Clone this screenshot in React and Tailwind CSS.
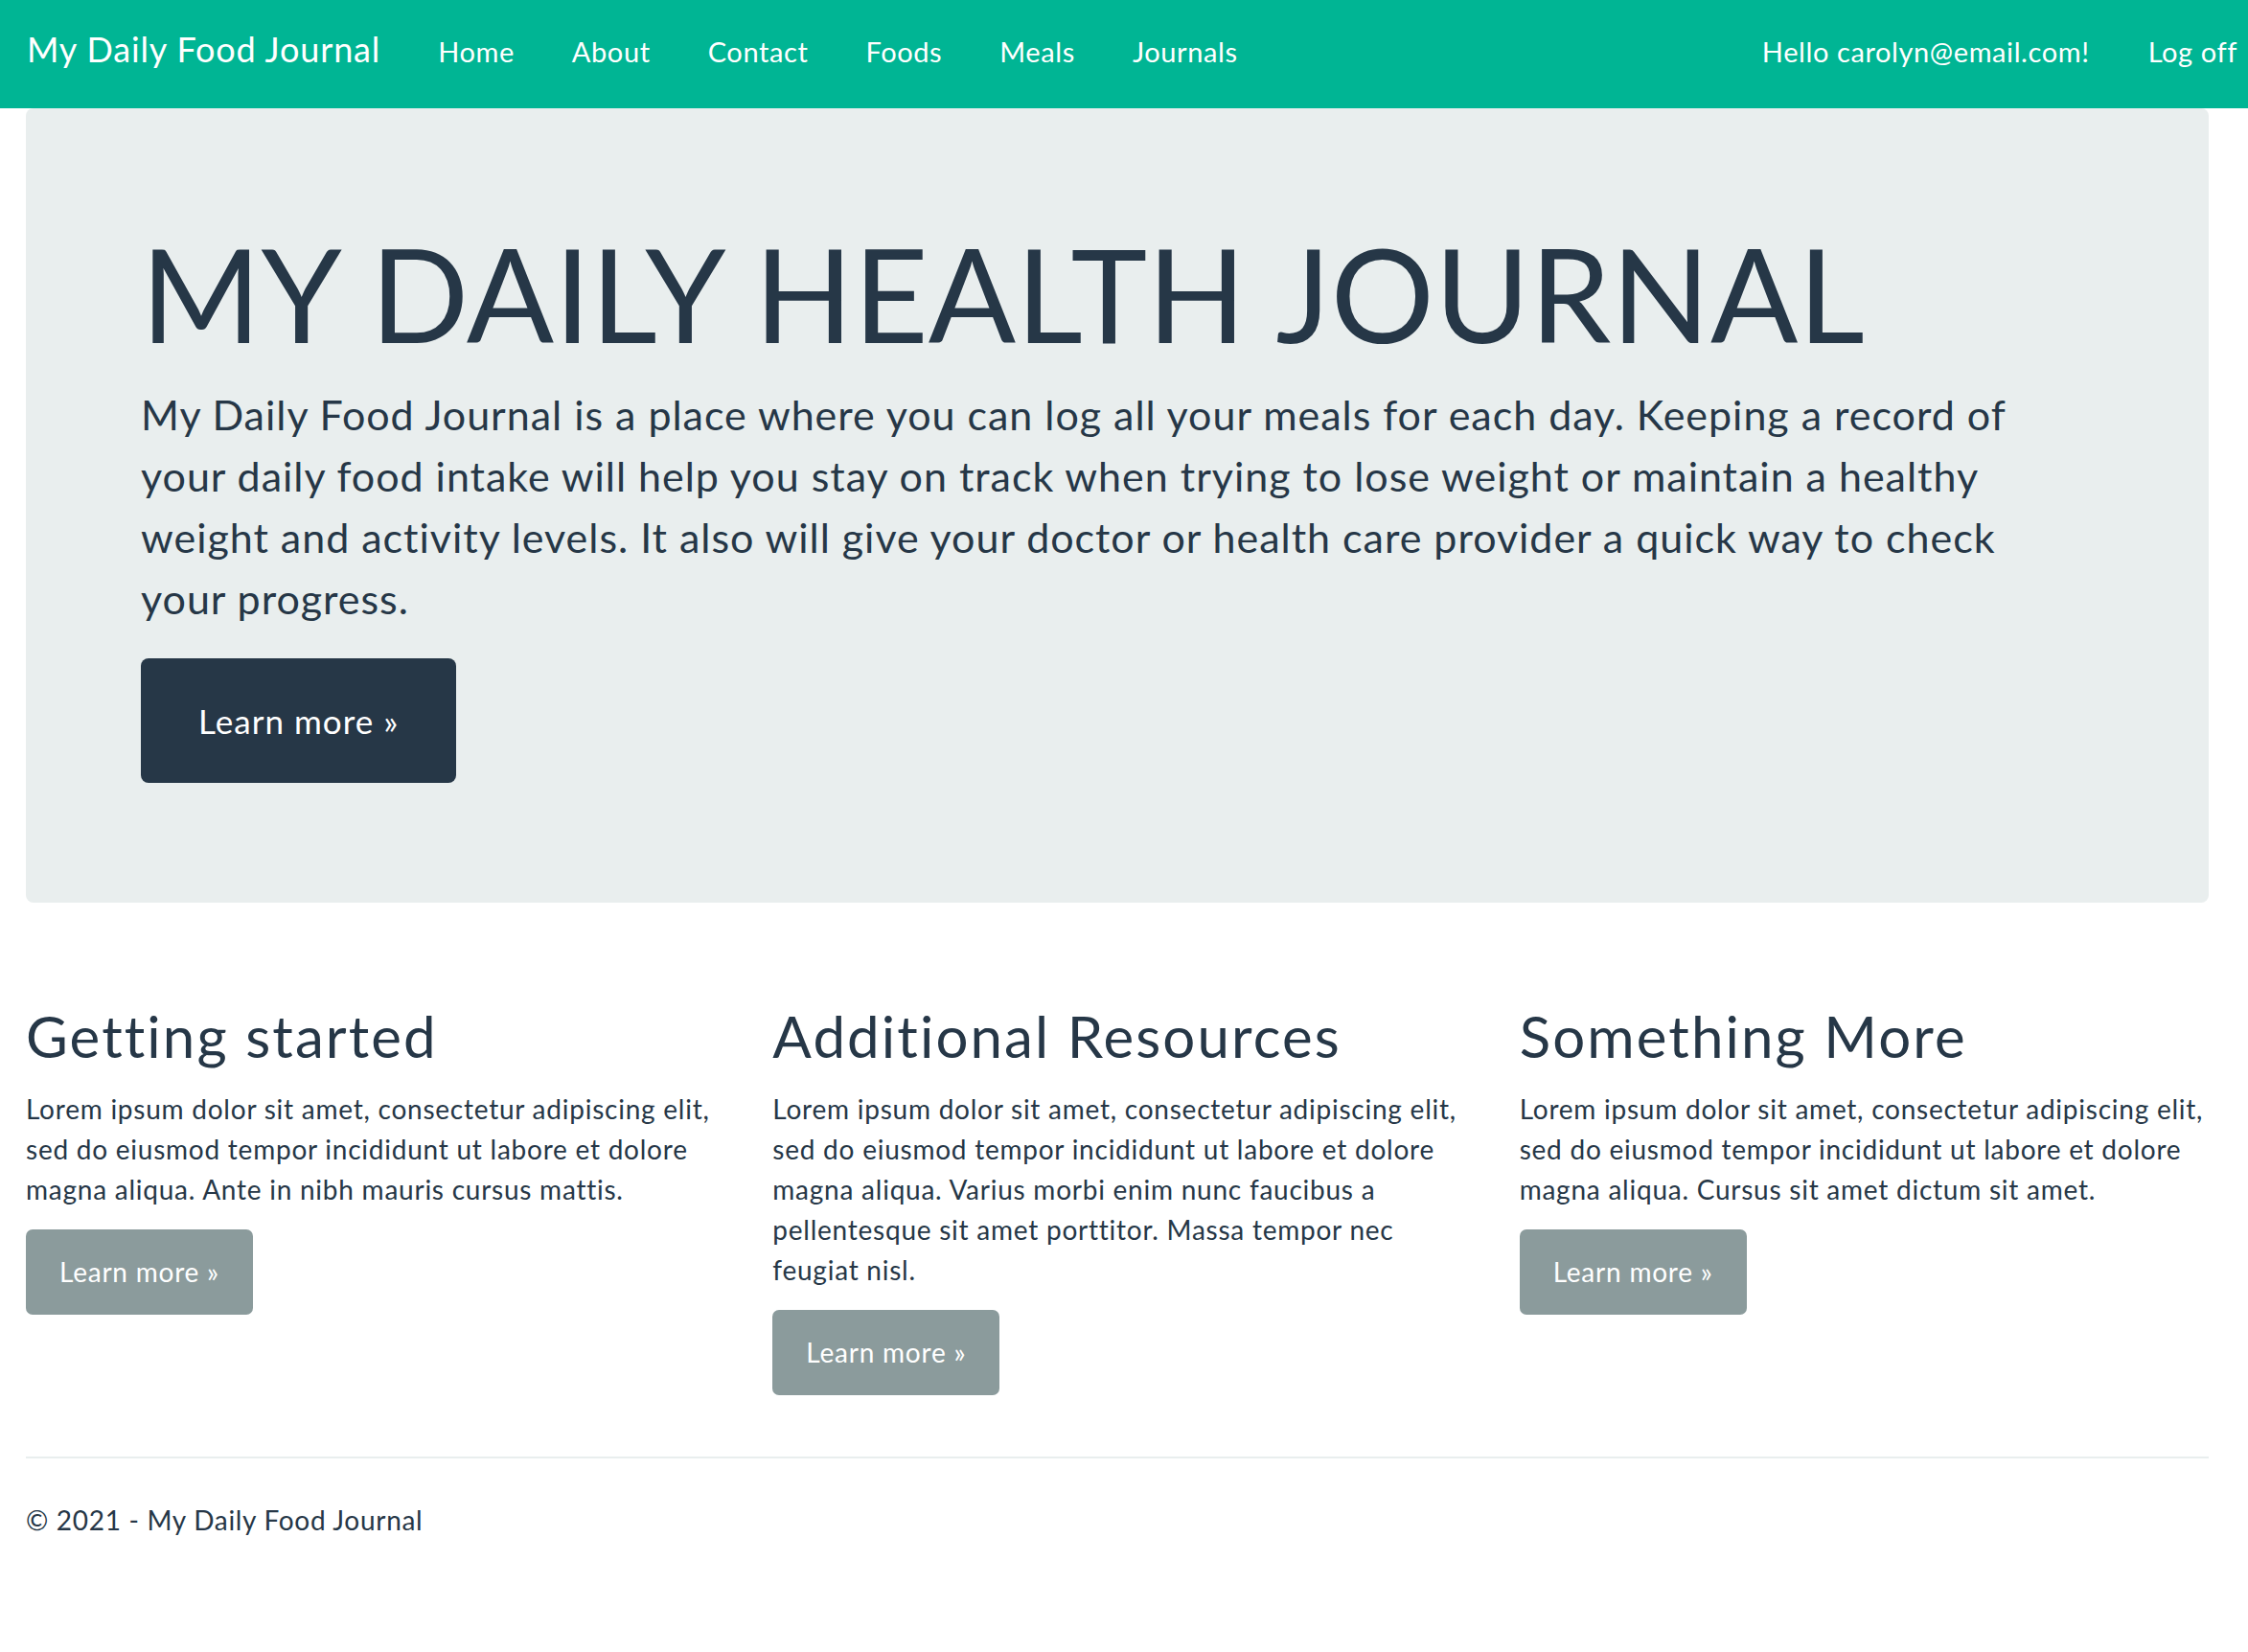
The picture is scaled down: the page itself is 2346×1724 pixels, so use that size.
import React from 'react';

const navLinks = ['Home', 'About', 'Contact', 'Foods', 'Meals', 'Journals'];

const columns = [
    {
        title: 'Getting started',
        text: 'Lorem ipsum dolor sit amet, consectetur adipiscing elit, sed do eiusmod tempor incididunt ut labore et dolore magna aliqua. Ante in nibh mauris cursus mattis.',
    },
    {
        title: 'Additional Resources',
        text: 'Lorem ipsum dolor sit amet, consectetur adipiscing elit, sed do eiusmod tempor incididunt ut labore et dolore magna aliqua. Varius morbi enim nunc faucibus a pellentesque sit amet porttitor. Massa tempor nec feugiat nisl.',
    },
    {
        title: 'Something More',
        text: 'Lorem ipsum dolor sit amet, consectetur adipiscing elit, sed do eiusmod tempor incididunt ut labore et dolore magna aliqua. Cursus sit amet dictum sit amet.',
    },
];

const App = () => {
    return (
        <div className="min-h-screen bg-white font-['Lato','Liberation_Sans',sans-serif] text-[#263747]">
            <nav className="flex h-[113px] items-baseline bg-[#00b594] pl-[28px] pr-[11px] pt-[28px] text-white">
                <a href="#" className="mr-[60px] text-[36px] leading-[46px] tracking-[0.85px]">My Daily Food Journal</a>
                <ul className="flex gap-[60px] text-[29px] leading-[35px] tracking-[0.6px]">
                    {navLinks.map(link => (
                        <li key={link}>
                            <a href="#">{link}</a>
                        </li>
                    ))}
                </ul>
                <div className="ml-auto flex gap-[61px] text-[29px] leading-[35px] tracking-[0.6px]">
                    <a href="#">Hello carolyn@email.com!</a>
                    <a href="#">Log off</a>
                </div>
            </nav>

            <div className="pl-[27px] pr-[41px]">
                <div className="rounded-[8px] bg-[#e9eeee] px-[120px] pb-[125px] pt-[112px]">
                    <h1 className="mb-[14px] text-[135px] leading-[162px] tracking-[0.25px]">MY DAILY HEALTH JOURNAL</h1>
                    <p className="mb-[30px] text-[43px] leading-[64px] tracking-[0.98px]">
                        My Daily Food Journal is a place where you can log all your meals for each day. Keeping a record of<br />
                        your daily food intake will help you stay on track when trying to lose weight or maintain a healthy<br />
                        weight and activity levels. It also will give your doctor or health care provider a quick way to check<br />
                        your progress.
                    </p>
                    <a href="#" className="inline-block rounded-[8px] bg-[#263747] px-[60px] py-[36px] text-[35px] leading-[58px] tracking-[1.04px] text-white">
                        Learn more &raquo;
                    </a>
                </div>

                <div className="mt-[103px] grid grid-cols-3 gap-x-[60px]">
                    {columns.map(col => (
                        <div key={col.title}>
                            <h2 className="mb-[19px] text-[60px] leading-[72px] tracking-[2.1px]">{col.title}</h2>
                            <p className="mb-[21px] text-[28px] leading-[42px] tracking-[0.76px]">{col.text}</p>
                            <a href="#" className="inline-block rounded-[7px] bg-[#8b9b9c] px-[35px] py-[23px] text-[28px] leading-[43px] tracking-[0.78px] text-white">
                                Learn more &raquo;
                            </a>
                        </div>
                    ))}
                </div>

                <hr className="mt-[64px] h-[2px] border-0 bg-[#e9eeee]" />
                <footer className="mt-[43px] pb-[100px]">
                    <p className="text-[28px] leading-[42px] tracking-[0.7px]">&copy; 2021 - My Daily Food Journal</p>
                </footer>
            </div>
        </div>
    );
};

export default App;
